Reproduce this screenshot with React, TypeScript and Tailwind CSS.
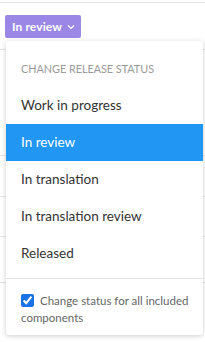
import { useState } from "react";

const statuses = [
  "Work in progress",
  "In review",
  "In translation",
  "In translation review",
  "Released",
];

export default function App() {
  const [current, setCurrent] = useState("In review");
  const [allIncluded, setAllIncluded] = useState(true);

  return (
    <div className="relative h-[342px] w-[205px] overflow-hidden bg-white font-[Lato,sans-serif]">
      {/* table behind the menu */}
      <div className="h-[3px] border-b border-[#e4e2ee]" />
      <div className="flex flex-col">
        <div className="h-[47px] border-b border-[#e3e3e3]" />
        <div className="h-[106px] border-b border-[#e3e3e3]" />
        <div className="h-[41px] border-b border-[#e3e3e3]" />
        <div className="h-[40px] border-b border-[#e3e3e3]" />
        <div className="h-[46px] border-b border-[#e3e3e3]" />
      </div>

      {/* status trigger */}
      <button className="absolute left-[5px] top-[15px] flex h-[23px] items-center gap-[5px] rounded-[2px] bg-[#9b88e6] pl-[7px] pr-[6px] text-[12px] font-bold tracking-[0.1px] text-white">
        {current}
        <svg width="8" height="6" viewBox="0 0 8 6" fill="none" stroke="currentColor" strokeWidth="1.2">
          <path d="M1 1.5 L4 4.5 L7 1.5" />
        </svg>
      </button>

      {/* dropdown */}
      <div className="absolute left-[6px] top-[41px] w-[197px] rounded-[3px] bg-white shadow-[0_1px_5px_rgba(0,0,0,0.2)]">
        <div className="px-[15px] pb-[11px] pt-[21px] text-[10.8px] uppercase leading-[14px] text-[#9a9a9a]">
          Change release status
        </div>
        <ul>
          {statuses.map((s) => (
            <li
              key={s}
              onClick={() => setCurrent(s)}
              className={`flex h-[37px] cursor-pointer items-center px-[15px] text-[13.5px] ${
                s === current ? "bg-[#2196f3] text-white" : "text-[#333]"
              }`}
            >
              {s}
            </li>
          ))}
        </ul>
        <div className="mt-[6px] border-t border-[#e3e3e3] pl-[15px] pr-[10px] pb-[9px] pt-[13px] text-[11.5px] leading-[17px] text-[#666]">
          <label className="cursor-pointer">
            <input
              type="checkbox"
              checked={allIncluded}
              onChange={(e) => setAllIncluded(e.target.checked)}
              className="mr-[6px] h-[13px] w-[13px] align-[-2px] accent-[#1a73e8]"
            />
            Change status for all included components
          </label>
        </div>
      </div>
    </div>
  );
}
